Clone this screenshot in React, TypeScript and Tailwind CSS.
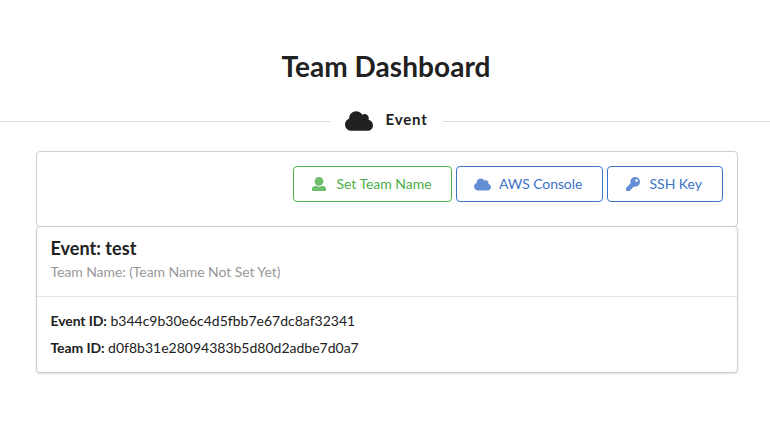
import React from "react";
import { FaCloud, FaKey } from "react-icons/fa";

type ActionProps = { icon: React.ReactNode; label: string; className: string };

function UserIcon({ className }: { className: string }) {
  return (
    <svg viewBox="0 0 512 512" fill="currentColor" className={className}>
      <path d="M256 0c88.366 0 160 71.634 160 160s-71.634 160-160 160S96 248.366 96 160 167.634 0 256 0zm183.283 333.821l-71.313-17.828c-74.923 53.89-165.738 41.864-223.94 0l-71.313 17.828C29.981 344.505 0 382.903 0 426.955V464c0 26.51 21.49 48 48 48h416c26.51 0 48-21.49 48-48v-37.045c0-44.052-29.981-82.45-72.717-93.134z" />
    </svg>
  );
}

function Action({ icon, label, className }: ActionProps) {
  return (
    <button className={`flex h-9 items-center rounded border text-sm leading-none ${className}`}>
      <span className="flex w-[17px] justify-center opacity-80">{icon}</span>
      <span>{label}</span>
    </button>
  );
}

export default function App() {
  return (
    <main className="h-[436px] w-[770px] overflow-hidden bg-white font-['Lato',sans-serif] text-[14px] text-[#212121]">
      <h1 className="pt-12 pl-0.5 text-center text-[28px] leading-9 font-bold tracking-[0.06px]">Team Dashboard</h1>
      <div className="mt-[23px] flex h-7 items-center">
        <div className="mt-px h-px w-[330px] bg-[#d9d9da]" />
        <FaCloud className="ml-[15px] size-7" />
        <span className="-mt-[3px] ml-[12.5px] text-[15px] font-bold tracking-[0.85px]">Event</span>
        <div className="mt-px ml-[15px] h-px flex-1 bg-[#d9d9da]" />
      </div>
      <div className="mt-4 ml-9 w-[702px]">
        <section className="flex h-[76px] justify-end gap-1 rounded border border-[#cecece] pt-[14px] pr-[14px]">
          <Action icon={<UserIcon className="size-[14px]" />} label="Set Team Name" className="w-[159px] gap-[9.5px] border-[#4bae47] pl-4 text-[#4bae47] tracking-[-0.03px]" />
          <Action icon={<FaCloud className="size-[17px]" />} label="AWS Console" className="w-[147px] gap-2 border-[#3d73c9] pl-[17px] text-[#3d73c9] tracking-[-0.08px]" />
          <Action icon={<FaKey className="size-[14px]" />} label="SSH Key" className="w-[116px] gap-[8.5px] border-[#3d73c9] pl-4 text-[#3d73c9] tracking-[-0.03px]" />
        </section>
        <section className="-mt-px h-[147px] rounded border border-[#cecece] bg-white shadow-[0_1px_2px_0_rgba(34,36,38,0.15)]">
          <header className="h-[70px] border-b border-[#e4e4e4] pr-[14px] pl-[13.5px] pt-2">
            <h2 className="text-[18px] leading-[27px] font-bold tracking-[0.04px]">Event: test</h2>
            <p className="leading-5 tracking-[-0.07px] text-[#999999]">Team Name: (Team Name Not Set Yet)</p>
          </header>
          <div className="px-[13.5px] pt-[10px] leading-[27px]">
            <p><b className="tracking-[-0.1px]">Event ID:</b> b344c9b30e6c4d5fbb7e67dc8af32341</p>
            <p><b className="tracking-[-0.1px]">Team ID:</b> d0f8b31e28094383b5d80d2adbe7d0a7</p>
          </div>
        </section>
      </div>
    </main>
  );
}
